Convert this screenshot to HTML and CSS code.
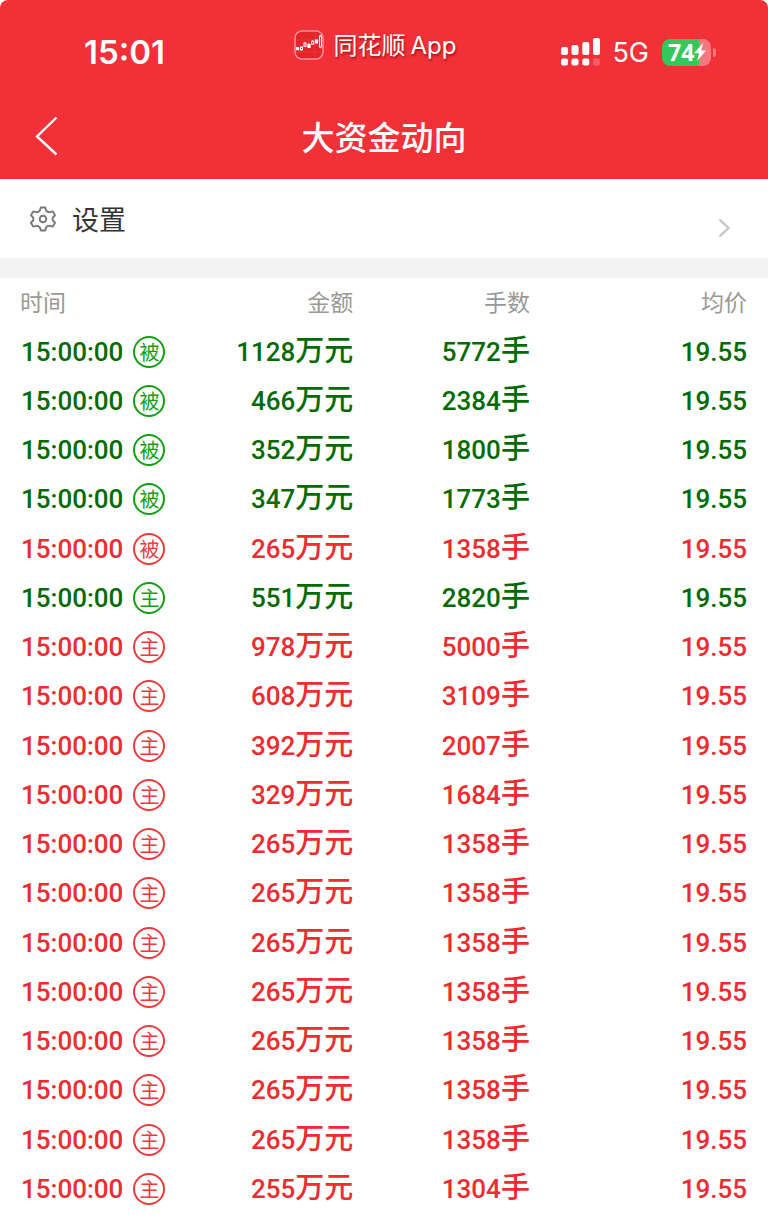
FILE: index.html
```
<!DOCTYPE html>
<html lang="zh-CN">
<head>
<meta charset="utf-8">
<meta name="viewport" content="width=device-width, initial-scale=1">
<title>大资金动向</title>
<link rel="stylesheet" href="styles.css">
</head>
<body>
<header class="top">
  <div class="status">
    <span class="clock">15:01</span>
    <div class="brand">
      <svg class="brand-logo" viewBox="0 0 30 30" width="30" height="30" aria-hidden="true">
        <rect x="1" y="1" width="28" height="28" rx="7" fill="#e3242b" stroke="#fa9498" stroke-width="1.5"/>
        <path d="M2 10H28M2 22H28M21 2V28" stroke="#ee4047" stroke-width=".6"/>
        <g fill="#fff"><rect x="2" y="17" width="3.2" height="3.2"/><rect x="13.4" y="14" width="3.2" height="4"/><rect x="21" y="9.5" width="3" height="4"/></g>
        <g fill="none" stroke="#fff" stroke-width="1"><rect x="6.5" y="17" width="2" height="3"/><rect x="10" y="13" width="2" height="3.4"/><rect x="17.7" y="11.2" width="2" height="3"/><rect x="25.4" y="6" width="2" height="11"/><path d="M11 12V13M15 13V14M18.7 10.2V11.2M26.4 4.8V6M26.4 17V18.2"/></g>
      </svg>
      <span class="brand-name">同花顺<span class="brand-app">App</span></span>
    </div>
    <div class="signals">
      <svg viewBox="0 0 39 28" width="39" height="28" role="img" aria-label="信号">
        <g fill="#fff"><rect x="0" y="9" width="7" height="8" rx="2"/><rect x="10.5" y="7" width="7" height="10" rx="2"/><rect x="21.3" y="4" width="7" height="13" rx="2"/><rect x="32" y="0" width="7" height="17" rx="2"/><rect x="0" y="20.5" width="7" height="7" rx="2"/><rect x="10.5" y="20.5" width="7" height="7" rx="2"/><rect x="21.3" y="20.5" width="7" height="7" rx="2"/></g>
        <rect x="32" y="20.5" width="7" height="7" rx="2" fill="#f75f66"/>
      </svg>
      <span class="network">5G</span>
      <div class="battery">
        <span class="level">74</span>
        <svg viewBox="0 0 12 20" width="12" height="20" aria-hidden="true"><path d="M9.2.8 0 11.2h5L3.2 19 12 8.4H7.2Z" fill="#fff"/></svg>
      </div>
      <span class="battery-tip"></span>
    </div>
  </div>
  <nav class="nav">
    <button class="back" type="button" aria-label="返回">
      <svg viewBox="0 0 24 40" width="24" height="40" aria-hidden="true"><path d="M22.5 1.5 3 20.5 22.5 38.5" fill="none" stroke="#fff" stroke-width="2.4"/></svg>
    </button>
    <h1 class="title">大资金动向</h1>
  </nav>
</header>
<main>
  <a class="settings" href="#settings">
    <svg class="gear" viewBox="0 0 26 26" width="26" height="26" aria-hidden="true">
      <path d="M10.8 1.5H15.2L16.2 4.8Q18.2 6.6 20 6.1L22.8 5.4L25 9.3L22.9 11.5Q22.3 13 22.9 14.5L25 16.7L22.8 20.6L20 19.9Q18.2 19.4 16.2 21.2L15.2 24.5H10.8L9.8 21.2Q7.8 19.4 6 19.9L3.2 20.6L1 16.7L3.1 14.5Q3.7 13 3.1 11.5L1 9.3L3.2 5.4L6 6.1Q7.8 6.6 9.8 4.8Z" fill="none" stroke="#777" stroke-width="1.9" stroke-linejoin="round"/>
      <circle cx="13" cy="13" r="3.3" fill="none" stroke="#777" stroke-width="1.9"/>
    </svg>
    <span>设置</span>
    <svg class="more" viewBox="0 0 12 20" width="12" height="20" aria-hidden="true"><path d="M1.5 1.5 10.5 10 1.5 18.5" fill="none" stroke="#c8c8c8" stroke-width="2.4"/></svg>
  </a>
  <table class="trades">
    <colgroup><col class="c-time"><col class="c-amount"><col class="c-lots"><col></colgroup>
    <thead><tr><th scope="col">时间</th><th scope="col">金额</th><th scope="col">手数</th><th scope="col">均价</th></tr></thead>
    <tbody>
      <tr class="sell"><td><div class="time">15:00:00<span class="tag">被</span></div></td><td>1128<span class="unit">万元</span></td><td>5772<span class="unit">手</span></td><td>19.55</td></tr>
      <tr class="sell"><td><div class="time">15:00:00<span class="tag">被</span></div></td><td>466<span class="unit">万元</span></td><td>2384<span class="unit">手</span></td><td>19.55</td></tr>
      <tr class="sell"><td><div class="time">15:00:00<span class="tag">被</span></div></td><td>352<span class="unit">万元</span></td><td>1800<span class="unit">手</span></td><td>19.55</td></tr>
      <tr class="sell"><td><div class="time">15:00:00<span class="tag">被</span></div></td><td>347<span class="unit">万元</span></td><td>1773<span class="unit">手</span></td><td>19.55</td></tr>
      <tr><td><div class="time">15:00:00<span class="tag">被</span></div></td><td>265<span class="unit">万元</span></td><td>1358<span class="unit">手</span></td><td>19.55</td></tr>
      <tr class="sell"><td><div class="time">15:00:00<span class="tag">主</span></div></td><td>551<span class="unit">万元</span></td><td>2820<span class="unit">手</span></td><td>19.55</td></tr>
      <tr><td><div class="time">15:00:00<span class="tag">主</span></div></td><td>978<span class="unit">万元</span></td><td>5000<span class="unit">手</span></td><td>19.55</td></tr>
      <tr><td><div class="time">15:00:00<span class="tag">主</span></div></td><td>608<span class="unit">万元</span></td><td>3109<span class="unit">手</span></td><td>19.55</td></tr>
      <tr><td><div class="time">15:00:00<span class="tag">主</span></div></td><td>392<span class="unit">万元</span></td><td>2007<span class="unit">手</span></td><td>19.55</td></tr>
      <tr><td><div class="time">15:00:00<span class="tag">主</span></div></td><td>329<span class="unit">万元</span></td><td>1684<span class="unit">手</span></td><td>19.55</td></tr>
      <tr><td><div class="time">15:00:00<span class="tag">主</span></div></td><td>265<span class="unit">万元</span></td><td>1358<span class="unit">手</span></td><td>19.55</td></tr>
      <tr><td><div class="time">15:00:00<span class="tag">主</span></div></td><td>265<span class="unit">万元</span></td><td>1358<span class="unit">手</span></td><td>19.55</td></tr>
      <tr><td><div class="time">15:00:00<span class="tag">主</span></div></td><td>265<span class="unit">万元</span></td><td>1358<span class="unit">手</span></td><td>19.55</td></tr>
      <tr><td><div class="time">15:00:00<span class="tag">主</span></div></td><td>265<span class="unit">万元</span></td><td>1358<span class="unit">手</span></td><td>19.55</td></tr>
      <tr><td><div class="time">15:00:00<span class="tag">主</span></div></td><td>265<span class="unit">万元</span></td><td>1358<span class="unit">手</span></td><td>19.55</td></tr>
      <tr><td><div class="time">15:00:00<span class="tag">主</span></div></td><td>265<span class="unit">万元</span></td><td>1358<span class="unit">手</span></td><td>19.55</td></tr>
      <tr><td><div class="time">15:00:00<span class="tag">主</span></div></td><td>265<span class="unit">万元</span></td><td>1358<span class="unit">手</span></td><td>19.55</td></tr>
      <tr><td><div class="time">15:00:00<span class="tag">主</span></div></td><td>255<span class="unit">万元</span></td><td>1304<span class="unit">手</span></td><td>19.55</td></tr>
    </tbody>
  </table>
</main>
</body>
</html>
```

FILE: styles.css
```
* {
  box-sizing: border-box;
}

body {
  margin: 0;
  background: #fff;
  color: #333;
  font-family: "Noto Sans CJK SC", sans-serif;
}

.top {
  background: #f23037;
  color: #fff;
  border-radius: 8px 8px 0 0;
}

.status {
  display: grid;
  grid-template-columns: 41% 1fr auto;
  align-items: center;
  padding: 12px 52px 0 0;
  height: 92px;
  font-family: Inter, sans-serif;
}

.clock {
  padding-left: 84px;
  font-size: 33px;
  font-weight: 600;
}

.brand {
  display: flex;
  align-items: center;
  gap: 10px;
  padding-bottom: 14px;
}

.brand-logo {
  display: block;
}

.brand-name {
  font: 24px/32px "Noto Sans CJK SC", sans-serif;
  text-shadow: 1px 2px 2px rgba(90, 0, 0, 0.5);
}

.brand-app {
  margin-left: 5px;
  font-family: Inter, "Noto Sans CJK SC", sans-serif;
}

.signals {
  display: flex;
  align-items: center;
}

.network {
  margin: 0 13px 0 12px;
  font-size: 27px;
}

.battery {
  display: flex;
  align-items: center;
  width: 49px;
  height: 27px;
  padding-left: 6px;
  border-radius: 8px;
  background: linear-gradient(90deg, #34c759 75%, #f8777c 75%);
}

.level {
  font-size: 23px;
  font-weight: 700;
  font-family: "Open Sans", sans-serif;
}

.battery-tip {
  width: 3px;
  height: 9px;
  margin-left: 2px;
  border-radius: 0 4px 4px 0;
  background: #f8777c;
}

.nav {
  display: grid;
  grid-template-columns: 80px 1fr 80px;
  align-items: center;
  height: 87px;
}

.back {
  display: flex;
  padding: 0 0 0 34px;
  border: 0;
  background: none;
}

.title {
  margin: 0;
  font-size: 33px;
  font-weight: 500;
  text-align: center;
}

.settings {
  display: flex;
  align-items: center;
  height: 99px;
  padding: 0 38px 0 30px;
  border-bottom: 20px solid #f4f4f4;
  color: #333;
  font-size: 27px;
  text-decoration: none;
}

.gear {
  margin-right: 16px;
}

.more {
  margin: 18px 0 0 auto;
}

.trades {
  width: 100%;
  table-layout: fixed;
  border-collapse: collapse;
  color: #ee2c2f;
  font: 500 26px/40px Roboto, "Noto Sans CJK SC", sans-serif;
  text-align: right;
}

.c-time {
  width: 22%;
}

.c-amount {
  width: 24%;
}

.c-lots {
  width: 23%;
}

th,
td {
  height: 49px;
  padding: 0;
  white-space: nowrap;
}

th {
  padding-bottom: 4px;
  color: #999;
  font: 23px/40px "Noto Sans CJK SC", sans-serif;
}

tbody tr:nth-child(4n) td {
  height: 50px;
}

th:first-child {
  padding-left: 20px;
  text-align: left;
}

th:last-child,
td:last-child {
  padding-right: 21px;
}

.time {
  display: flex;
  align-items: center;
  gap: 10px;
  padding-left: 21px;
}

.tag {
  display: flex;
  align-items: center;
  justify-content: center;
  width: 32px;
  height: 32px;
  border: 2px solid;
  border-radius: 50%;
  color: #ee3a3d;
  font: 20px/20px "Noto Sans CJK SC", sans-serif;
}

.unit {
  font: 500 29px/30px "Noto Sans CJK SC", sans-serif;
}

.sell {
  color: #046b04;
}

.sell .tag {
  color: #12a012;
}
```
